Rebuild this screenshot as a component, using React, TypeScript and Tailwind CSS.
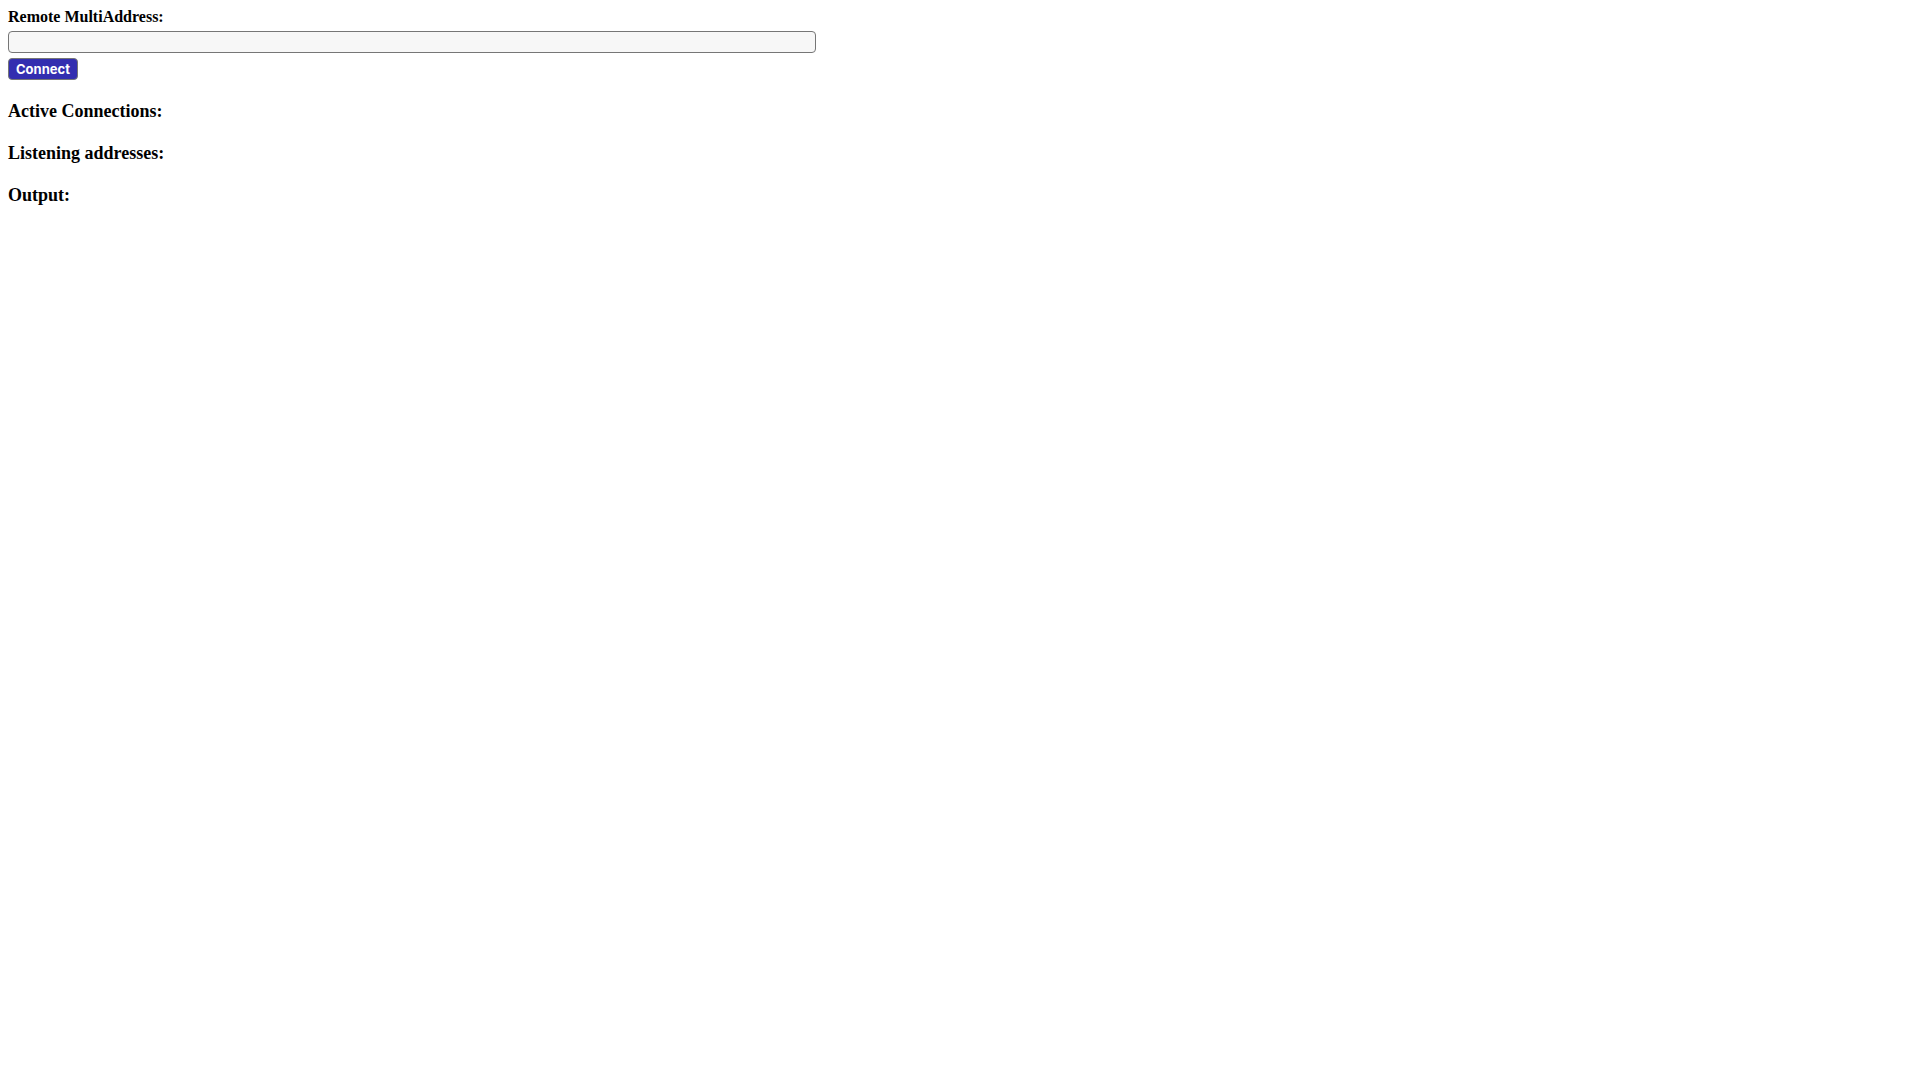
import { useState } from 'react';
import type { FormEvent } from 'react';

const sections = ['Active Connections:', 'Listening addresses:', 'Output:'];

export default function App() {
  const [address, setAddress] = useState('');

  const handleConnect = (e: FormEvent) => {
    e.preventDefault();
  };

  return (
    <main className="p-2 font-['Liberation_Serif',serif] text-base text-black">
      <form onSubmit={handleConnect} className="flex flex-col items-start gap-[5px]">
        <label htmlFor="address" className="leading-[18px] font-bold">
          Remote MultiAddress:
        </label>
        <input
          id="address"
          type="text"
          value={address}
          onChange={(e) => setAddress(e.target.value)}
          className="h-[22px] w-full max-w-[808px] rounded border border-[#767676] bg-[#f7f7f7] px-1 font-[Inter,sans-serif] text-[13px]"
        />
        <button
          type="submit"
          className="h-[22px] rounded border border-[#767676] bg-[#332eb0] px-[7px] font-[Inter,sans-serif] text-[13px] leading-4 font-bold text-white"
        >
          Connect
        </button>
      </form>

      <div className="mt-5 flex flex-col gap-5">
        {sections.map((title) => (
          <h3 key={title} className="text-lg leading-[22px] font-bold">
            {title}
          </h3>
        ))}
      </div>
    </main>
  );
}
